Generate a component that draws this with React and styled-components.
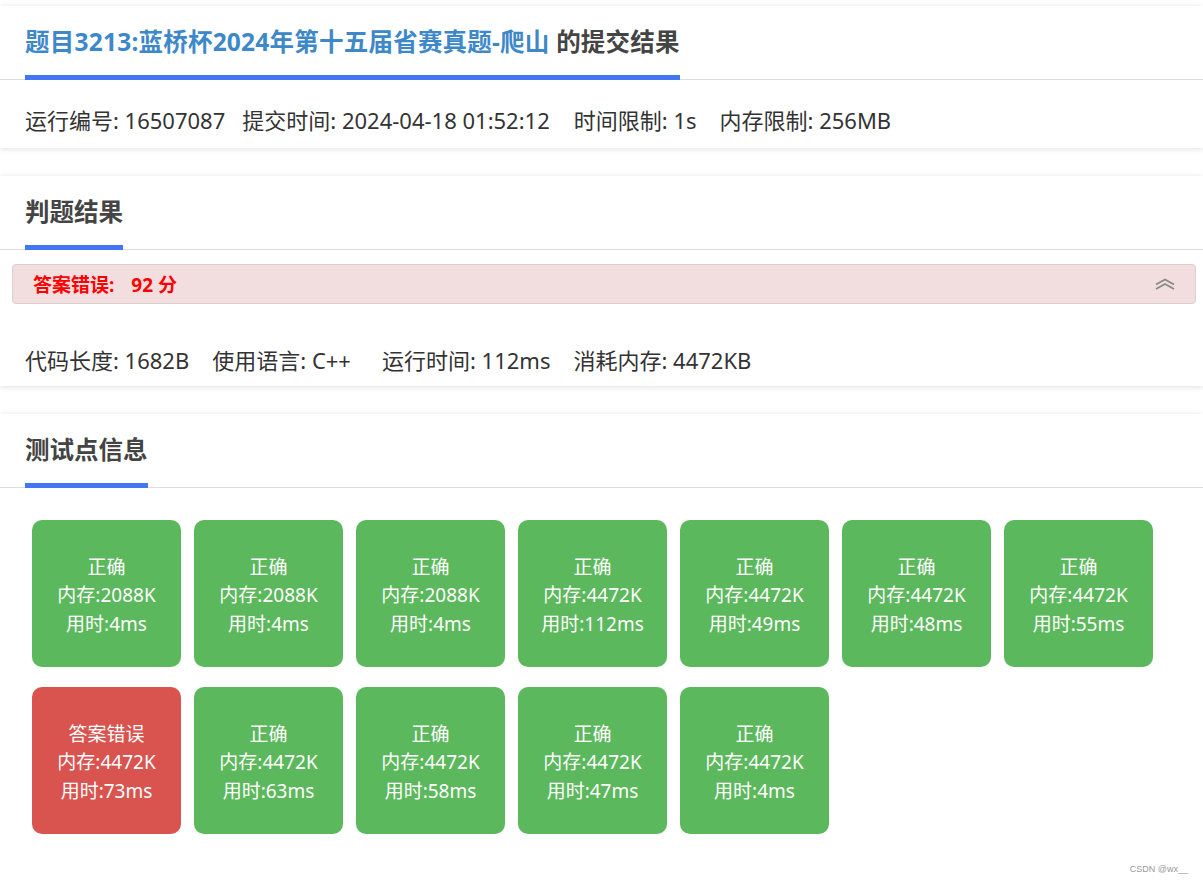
import React from 'react';
import styled, { createGlobalStyle } from 'styled-components';

const GlobalStyle = createGlobalStyle`
    body {
        margin: 0;
        background: #fff;
        font-family: "Noto Sans", "Noto Sans CJK SC", sans-serif;
        color: #333;
    }
`

const cases = [
    { ok: true, mem: '2088K', time: '4ms' },
    { ok: true, mem: '2088K', time: '4ms' },
    { ok: true, mem: '2088K', time: '4ms' },
    { ok: true, mem: '4472K', time: '112ms' },
    { ok: true, mem: '4472K', time: '49ms' },
    { ok: true, mem: '4472K', time: '48ms' },
    { ok: true, mem: '4472K', time: '55ms' },
    { ok: false, mem: '4472K', time: '73ms' },
    { ok: true, mem: '4472K', time: '63ms' },
    { ok: true, mem: '4472K', time: '58ms' },
    { ok: true, mem: '4472K', time: '47ms' },
    { ok: true, mem: '4472K', time: '4ms' },
];

function ChevronsUp() {
    return (
        <svg width="20" height="12" viewBox="0 0 20 12" fill="none" stroke="#888" strokeWidth="1.8">
            <path d="M1 6.5 L10 1.5 L19 6.5" />
            <path d="M1 11 L10 6 L19 11" />
        </svg>
    )
}

export default function App() {
    return (
        <Page>
            <GlobalStyle />

            {/* submission info */}
            <Card>
                <CardHead>
                    <Tab wide>
                        <ProblemLink>题目3213:蓝桥杯2024年第十五届省赛真题-爬山</ProblemLink> 的提交结果
                    </Tab>
                </CardHead>
                <InfoRow top={25} bottom={13}>
                    <InfoItem space={17}>运行编号: 16507087</InfoItem>
                    <InfoItem space={24}>提交时间: 2024-04-18 01:52:12</InfoItem>
                    <InfoItem space={23}>时间限制: 1s</InfoItem>
                    <InfoItem>内存限制: 256MB</InfoItem>
                </InfoRow>
            </Card>

            {/* judge result */}
            <Card>
                <CardHead>
                    <Tab>判题结果</Tab>
                </CardHead>
                <Alert>
                    <AlertText>
                        答案错误:<Score>92 分</Score>
                    </AlertText>
                    <ChevronsUp />
                </Alert>
                <InfoRow top={41} bottom={11}>
                    <InfoItem space={23}>代码长度: 1682B</InfoItem>
                    <InfoItem space={31}>使用语言: C++</InfoItem>
                    <InfoItem space={23}>运行时间: 112ms</InfoItem>
                    <InfoItem>消耗内存: 4472KB</InfoItem>
                </InfoRow>
            </Card>

            {/* test points */}
            <Card last>
                <CardHead>
                    <Tab>测试点信息</Tab>
                </CardHead>
                <Grid>
                    {cases.map((c, i) => (
                        <Tile key={i} ok={c.ok}>
                            <div>{c.ok ? '正确' : '答案错误'}</div>
                            <div>内存:{c.mem}</div>
                            <div>用时:{c.time}</div>
                        </Tile>
                    ))}
                </Grid>
            </Card>

            <Watermark>CSDN @wx__</Watermark>
        </Page>
    )
}

const Page = styled.div`
    position: relative;
    height: 884px;
    padding-top: 6px;
    box-sizing: border-box;
    overflow: hidden;
`

const Card = styled.div`
    background: #fff;
    box-shadow: 0 1px 6px rgba(0, 0, 0, 0.13);
    margin-bottom: ${p => p.last ? '0' : '28px'};
    padding-bottom: ${p => p.last ? '60px' : '0'};
`

const CardHead = styled.div`
    border-bottom: 1px solid #dcdcdc;
    padding-left: 25px;
`

const Tab = styled.div`
    display: inline-block;
    padding: 19px 0 16px;
    line-height: 34px;
    font-size: 24.5px;
    font-weight: 700;
    letter-spacing: ${p => p.wide ? '0.22px' : '0'};
    color: #444;
    border-bottom: 5px solid #4276f6;
    margin-bottom: -1px;
`

const ProblemLink = styled.span`
    color: #3d88c9;
`

const InfoRow = styled.div`
    display: flex;
    padding: ${p => p.top}px 25px ${p => p.bottom}px;
    font-size: 22px;
    line-height: 30px;
    color: #333;
`

const InfoItem = styled.span`
    margin-right: ${p => p.space || 0}px;
    white-space: pre;
`

const Alert = styled.div`
    display: flex;
    align-items: center;
    justify-content: space-between;
    margin: 14px 7px 0 12px;
    height: 40px;
    box-sizing: border-box;
    padding: 0 20px 0 20px;
    background: #f2dede;
    border: 1px solid #dccfcf;
    border-radius: 4px;
`

const AlertText = styled.span`
    color: #f00;
    font-size: 19px;
    font-weight: 700;
`

const Score = styled.span`
    margin-left: 17px;
`

const Grid = styled.div`
    display: flex;
    flex-wrap: wrap;
    column-gap: 13px;
    row-gap: 20px;
    padding: 32px 32px 0;
`

const Tile = styled.div`
    width: 149px;
    height: 147px;
    border-radius: 10px;
    background: ${p => p.ok ? '#5cb85c' : '#d9534f'};
    color: #fff;
    font-size: 19px;
    line-height: 28.5px;
    display: flex;
    flex-direction: column;
    align-items: center;
    justify-content: center;
    padding-top: 4px;
    box-sizing: border-box;
`

const Watermark = styled.div`
    position: absolute;
    right: 15px;
    bottom: 9px;
    font-size: 9px;
    line-height: 11px;
    color: #999;
    font-family: "Liberation Sans", sans-serif;
`
